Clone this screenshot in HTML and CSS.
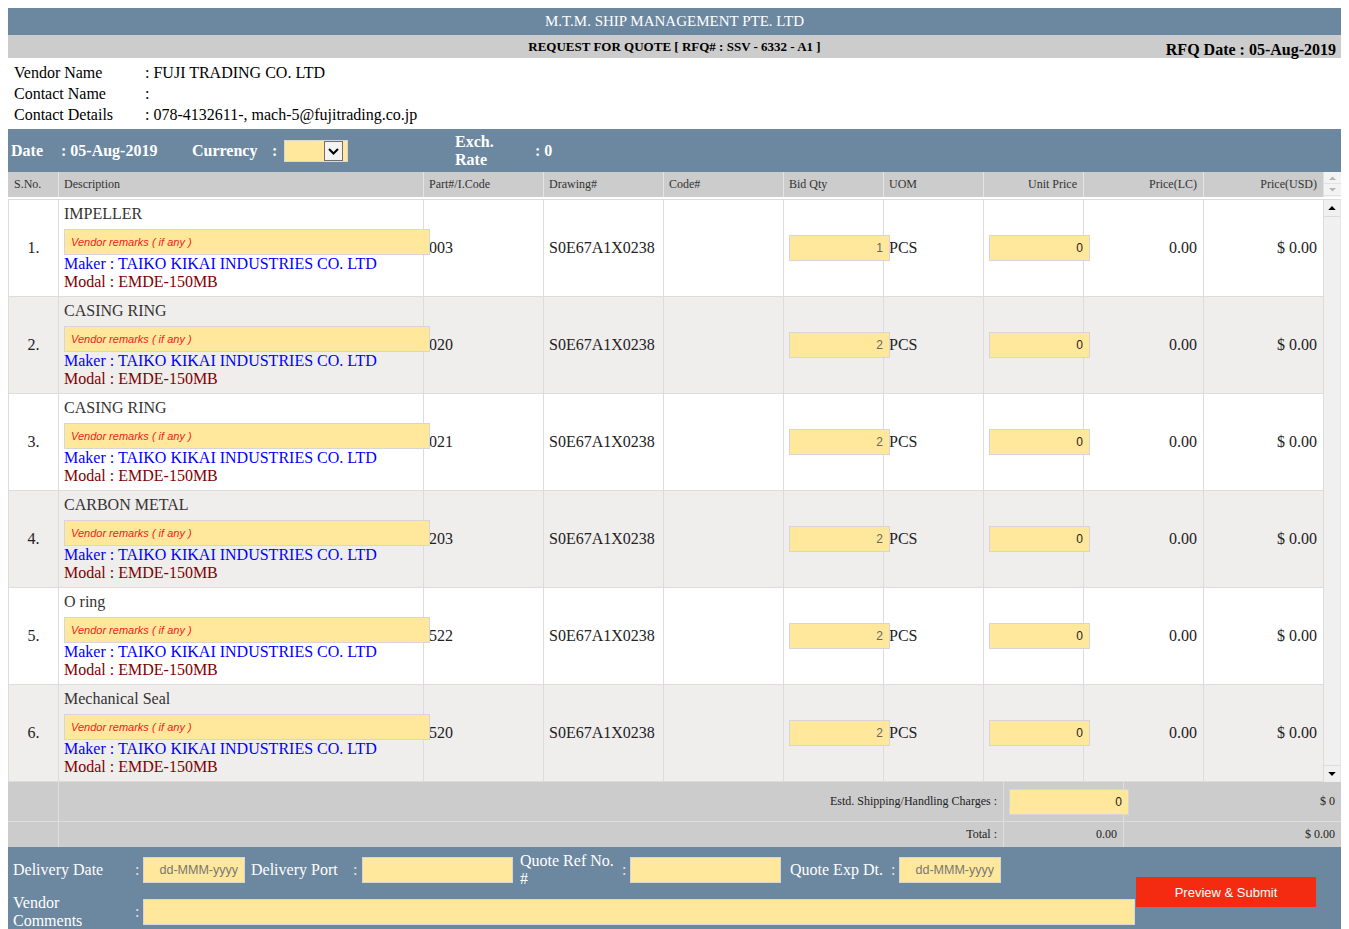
FILE: index.html
```html
<!DOCTYPE html>
<html lang="en">
<head>
<meta charset="utf-8">
<title>Request for Quote</title>
<link rel="stylesheet" href="styles.css">
</head>
<body>
<div class="page">
  <header class="topbar">M.T.M. SHIP MANAGEMENT PTE. LTD</header>
  <div class="subbar">
    <span></span>
    <span class="rfq-title">REQUEST FOR QUOTE [ RFQ# : SSV - 6332 - A1 ]</span>
    <span class="rfq-date">RFQ Date : 05-Aug-2019</span>
  </div>

  <div class="vendor">
    <div>Vendor Name</div><div>: FUJI TRADING CO. LTD</div>
    <div>Contact Name</div><div>:</div>
    <div>Contact Details</div><div>: 078-4132611-, mach-5@fujitrading.co.jp</div>
  </div>

  <div class="datebar">
    <span class="d-lbl">Date</span>
    <span class="d-val">: 05-Aug-2019</span>
    <span class="d-cur">Currency</span>
    <span class="d-colon">:</span>
    <span class="select"><span class="dd"><svg width="17" height="18" viewBox="0 0 17 18"><polyline points="4,7 8.5,11.5 13,7" fill="none" stroke="#000" stroke-width="2"/></svg></span></span>
    <span class="d-exch">Exch. Rate</span>
    <span class="d-rate">: 0</span>
  </div>

  <div class="thead-row">
    <div class="thead cols">
      <div class="th">S.No.</div>
      <div class="th">Description</div>
      <div class="th">Part#/I.Code</div>
      <div class="th">Drawing#</div>
      <div class="th">Code#</div>
      <div class="th">Bid Qty</div>
      <div class="th">UOM</div>
      <div class="th r">Unit Price</div>
      <div class="th r">Price(LC)</div>
      <div class="th r">Price(USD)</div>
    </div>
    <div class="mini-scroll">
      <span class="mini-btn"><svg width="17" height="12" viewBox="0 0 17 12"><polygon points="5,8 8.5,4.5 12,8" fill="#b5b5b5"/></svg></span>
      <span class="mini-btn"><svg width="17" height="12" viewBox="0 0 17 12"><polygon points="5,4 8.5,7.5 12,4" fill="#b5b5b5"/></svg></span>
    </div>
  </div>

  <div class="tbody-row">
    <div class="tbody">
      <div class="tr cols">
        <div class="td c">1.</div>
        <div class="td desc">
          <div class="item">IMPELLER</div>
          <input class="remarks" type="text" placeholder="Vendor remarks ( if any )">
          <div class="maker">Maker : TAIKO KIKAI INDUSTRIES CO. LTD</div>
          <div class="modal">Modal : EMDE-150MB</div>
        </div>
        <div class="td">003</div>
        <div class="td">S0E67A1X0238</div>
        <div class="td"></div>
        <div class="td"><input class="num qty" type="text" value="1"></div>
        <div class="td">PCS</div>
        <div class="td"><input class="num" type="text" value="0"></div>
        <div class="td r">0.00</div>
        <div class="td r">$ 0.00</div>
      </div>
      <div class="tr cols alt">
        <div class="td c">2.</div>
        <div class="td desc">
          <div class="item">CASING RING</div>
          <input class="remarks" type="text" placeholder="Vendor remarks ( if any )">
          <div class="maker">Maker : TAIKO KIKAI INDUSTRIES CO. LTD</div>
          <div class="modal">Modal : EMDE-150MB</div>
        </div>
        <div class="td">020</div>
        <div class="td">S0E67A1X0238</div>
        <div class="td"></div>
        <div class="td"><input class="num qty" type="text" value="2"></div>
        <div class="td">PCS</div>
        <div class="td"><input class="num" type="text" value="0"></div>
        <div class="td r">0.00</div>
        <div class="td r">$ 0.00</div>
      </div>
      <div class="tr cols">
        <div class="td c">3.</div>
        <div class="td desc">
          <div class="item">CASING RING</div>
          <input class="remarks" type="text" placeholder="Vendor remarks ( if any )">
          <div class="maker">Maker : TAIKO KIKAI INDUSTRIES CO. LTD</div>
          <div class="modal">Modal : EMDE-150MB</div>
        </div>
        <div class="td">021</div>
        <div class="td">S0E67A1X0238</div>
        <div class="td"></div>
        <div class="td"><input class="num qty" type="text" value="2"></div>
        <div class="td">PCS</div>
        <div class="td"><input class="num" type="text" value="0"></div>
        <div class="td r">0.00</div>
        <div class="td r">$ 0.00</div>
      </div>
      <div class="tr cols alt">
        <div class="td c">4.</div>
        <div class="td desc">
          <div class="item">CARBON METAL</div>
          <input class="remarks" type="text" placeholder="Vendor remarks ( if any )">
          <div class="maker">Maker : TAIKO KIKAI INDUSTRIES CO. LTD</div>
          <div class="modal">Modal : EMDE-150MB</div>
        </div>
        <div class="td">203</div>
        <div class="td">S0E67A1X0238</div>
        <div class="td"></div>
        <div class="td"><input class="num qty" type="text" value="2"></div>
        <div class="td">PCS</div>
        <div class="td"><input class="num" type="text" value="0"></div>
        <div class="td r">0.00</div>
        <div class="td r">$ 0.00</div>
      </div>
      <div class="tr cols">
        <div class="td c">5.</div>
        <div class="td desc">
          <div class="item">O ring</div>
          <input class="remarks" type="text" placeholder="Vendor remarks ( if any )">
          <div class="maker">Maker : TAIKO KIKAI INDUSTRIES CO. LTD</div>
          <div class="modal">Modal : EMDE-150MB</div>
        </div>
        <div class="td">522</div>
        <div class="td">S0E67A1X0238</div>
        <div class="td"></div>
        <div class="td"><input class="num qty" type="text" value="2"></div>
        <div class="td">PCS</div>
        <div class="td"><input class="num" type="text" value="0"></div>
        <div class="td r">0.00</div>
        <div class="td r">$ 0.00</div>
      </div>
      <div class="tr cols alt">
        <div class="td c">6.</div>
        <div class="td desc">
          <div class="item">Mechanical Seal</div>
          <input class="remarks" type="text" placeholder="Vendor remarks ( if any )">
          <div class="maker">Maker : TAIKO KIKAI INDUSTRIES CO. LTD</div>
          <div class="modal">Modal : EMDE-150MB</div>
        </div>
        <div class="td">520</div>
        <div class="td">S0E67A1X0238</div>
        <div class="td"></div>
        <div class="td"><input class="num qty" type="text" value="2"></div>
        <div class="td">PCS</div>
        <div class="td"><input class="num" type="text" value="0"></div>
        <div class="td r">0.00</div>
        <div class="td r">$ 0.00</div>
      </div>
    </div>
    <div class="vscroll">
      <span class="sb-btn"><svg width="17" height="16" viewBox="0 0 17 16"><polygon points="4.5,10 8.5,6 12.5,10" fill="#000"/></svg></span>
      <span class="sb-track"></span>
      <span class="sb-btn down"><svg width="17" height="16" viewBox="0 0 17 16"><polygon points="4.5,6 8.5,10 12.5,6" fill="#000"/></svg></span>
    </div>
  </div>

  <div class="totals">
    <div class="tot-row tall">
      <div class="tc"></div>
      <div class="tc r">Estd. Shipping/Handling Charges :</div>
      <div class="tc"><input class="num ship" type="text" value="0"></div>
      <div class="tc r">$ 0</div>
    </div>
    <div class="tot-row">
      <div class="tc"></div>
      <div class="tc r">Total :</div>
      <div class="tc r">0.00</div>
      <div class="tc r">$ 0.00</div>
    </div>
  </div>

  <div class="footer">
    <span class="f-lbl">Delivery Date</span>
    <span class="f-colon">:</span>
    <span class="f-cell"><input class="f-in date" type="text" placeholder="dd-MMM-yyyy"></span>
    <span class="f-lbl">Delivery Port</span>
    <span class="f-colon">:</span>
    <span class="f-cell"><input class="f-in wide" type="text"></span>
    <span class="f-lbl">Quote Ref No. #</span>
    <span class="f-colon">:</span>
    <span class="f-cell"><input class="f-in wide" type="text"></span>
    <span class="f-lbl">Quote Exp Dt.</span>
    <span class="f-colon">:</span>
    <span class="f-cell"><input class="f-in date" type="text" placeholder="dd-MMM-yyyy"></span>
    <button class="submit" type="button">Preview &amp; Submit</button>

    <span class="f-lbl">Vendor Comments</span>
    <span class="f-colon">:</span>
    <span class="f-cell comments"><input class="f-in full" type="text"></span>
  </div>
</div>
</body>
</html>
```

FILE: styles.css
```css
* { box-sizing: border-box; }

html, body { overflow: hidden; }

body {
  margin: 8px 8px 0;
  font-family: "Liberation Serif", "Times New Roman", serif;
  color: #222;
  background: #fff;
}

.page { width: 1333px; }

/* ---------- top bars ---------- */
.topbar {
  height: 27px;
  line-height: 27px;
  background: #6c87a0;
  color: #fff;
  font-size: 15px;
  text-align: center;
}

.subbar {
  height: 23px;
  background: #cccccc;
  display: grid;
  grid-template-columns: 1fr auto 1fr;
  color: #000;
}
.rfq-title {
  font-size: 13px;
  font-weight: bold;
  line-height: 23px;
}
.rfq-date {
  justify-self: end;
  font-size: 16px;
  font-weight: bold;
  line-height: 23px;
  padding-top: 3px;
  padding-right: 5px;
  white-space: nowrap;
}

/* ---------- vendor ---------- */
.vendor {
  display: grid;
  grid-template-columns: 131px 1fr;
  grid-auto-rows: 21px;
  line-height: 21px;
  font-size: 16px;
  color: #000;
  padding: 4px 0 4px 6px;
}

/* ---------- date bar ---------- */
.datebar {
  height: 43px;
  background: #6c87a0;
  color: #fff;
  font-weight: bold;
  font-size: 16px;
  display: flex;
  align-items: center;
}
.d-lbl { width: 53px; padding-left: 3px; }
.d-val { width: 131px; }
.d-cur { width: 80px; }
.d-colon { width: 12px; }
.select {
  width: 64px;
  height: 22px;
  background: #ffe89c;
  border: 1px solid #d8d8d8;
  display: flex;
  align-items: center;
  justify-content: flex-end;
  padding-right: 4px;
  margin-right: 107px;
}
.dd {
  width: 19px;
  height: 20px;
  border: 1px solid #707070;
  background: #f3f3f3;
  display: flex;
  align-items: center;
  justify-content: center;
}
.d-exch {
  width: 80px;
  padding-right: 30px;
  line-height: 18px;
}

/* ---------- items table ---------- */
.cols {
  display: grid;
  grid-template-columns: 50px 365px 120px 120px 120px 100px 100px 100px 120px 120px;
}

.thead-row { display: flex; height: 25px; }
.thead {
  width: 1315px;
  background: #cccccc;
  font-size: 12px;
  color: #333;
}
.th {
  line-height: 25px;
  padding: 0 6px 0 5px;
  border-left: 1px solid #e3e3e3;
  white-space: nowrap;
}
.th:first-child { border-left: 0; padding-left: 6px; }
.th.r { text-align: right; }

.mini-scroll {
  width: 18px;
  background: #f3f3f3;
  border-left: 1px solid #e0e0e0;
  display: flex;
  flex-direction: column;
}
.mini-btn {
  height: 12px;
  display: flex;
  align-items: center;
  justify-content: center;
  border-bottom: 1px solid #e2e2e2;
}
.mini-btn svg { display: block; }

.tbody-row {
  display: flex;
  padding-top: 2px;
}
.tbody {
  width: 1315px;
  border-top: 1px solid #dcdcdc;
  font-size: 16px;
}
.tr {
  height: 97px;
  border-bottom: 1px solid #dcdcdc;
  background: #fff;
}
.tr.alt { background: #f0eded; }
.td {
  border-left: 1px solid #dcdcdc;
  padding: 0 6px 0 5px;
  display: flex;
  align-items: center;
  white-space: nowrap;
  color: #222;
}
.td.c { justify-content: center; padding: 0; }
.td.r { justify-content: flex-end; }

.td.desc {
  flex-direction: column;
  align-items: flex-start;
  justify-content: flex-start;
  padding-top: 5px;
}
.item { line-height: 18px; color: #333; }
.maker { line-height: 18px; color: #0000ff; }
.modal { line-height: 18px; color: #800000; }

input {
  position: relative;
  z-index: 1;
  margin: 0;
  height: 26px;
  background: #ffe89c;
  border: 1px solid #d6d6d6;
  outline: none;
  font-family: "Liberation Sans", Arial, sans-serif;
}
.remarks {
  width: 366px;
  margin-top: 6px;
  padding: 0 6px;
  font-size: 11px;
  font-style: italic;
}
.remarks::placeholder { color: #f21b1b; opacity: 1; }

.num {
  width: 101px;
  text-align: right;
  padding: 0 6px;
  font-size: 12px;
  color: #222;
}
.num.qty { color: #666; }
.num.ship { width: 120px; }

.vscroll {
  width: 18px;
  margin-top: 0;
  background: #f0f0f0;
  border-left: 1px solid #dcdcdc;
  border-top: 1px solid #dcdcdc;
  border-right: 1px solid #e6e6e6;
  display: flex;
  flex-direction: column;
}
.sb-btn {
  height: 17px;
  display: flex;
  align-items: center;
  justify-content: center;
  border-bottom: 1px solid #dcdcdc;
  background: #f0f0f0;
}
.sb-btn.down { border-bottom: 0; border-top: 1px solid #dcdcdc; }
.sb-btn svg { display: block; }
.sb-track { flex: 1; }

/* ---------- totals ---------- */
.totals {
  background: #cccccc;
  font-size: 12px;
  color: #222;
}
.tot-row {
  display: grid;
  grid-template-columns: 50px 945px 120px 218px;
  height: 25px;
}
.tot-row.tall {
  height: 40px;
  border-bottom: 1px solid #dedede;
}
.tc {
  display: flex;
  align-items: center;
  padding: 0 6px 0 5px;
  border-left: 1px solid #dedede;
  white-space: nowrap;
}
.tc:first-child { border-left: 0; }
.tc.r { justify-content: flex-end; }

/* ---------- footer ---------- */
.footer {
  height: 82px;
  background: #6c87a0;
  padding: 8px 0 0 5px;
  display: grid;
  grid-template-columns: 122px 8px 108px 102px 9px 158px 102px 8px 160px 101px 8px 237px 180px;
  grid-template-rows: 30px 34px;
  row-gap: 10px;
  align-items: center;
  color: #fff;
  font-size: 16px;
}
.f-lbl {
  line-height: 18px;
  padding-right: 6px;
}
.f-colon { color: #e2e2e2; }
.f-cell { display: flex; align-items: center; }
.f-in {
  height: 26px;
  padding: 0 6px;
  font-size: 12.5px;
  text-align: right;
  color: #222;
}
.f-in::placeholder { color: #777; opacity: 1; }
.f-in.date { width: 102px; }
.f-in.wide { width: 151px; }
.f-in.full { width: 992px; }
.comments { grid-column: 3 / 13; }

.submit {
  grid-column: 13;
  grid-row: 1 / 3;
  align-self: center;
  width: 180px;
  height: 30px;
  border: 0;
  margin: 0;
  background: #f42b11;
  color: #fff;
  font-family: "Liberation Sans", Arial, sans-serif;
  font-size: 13px;
  cursor: pointer;
}
```
